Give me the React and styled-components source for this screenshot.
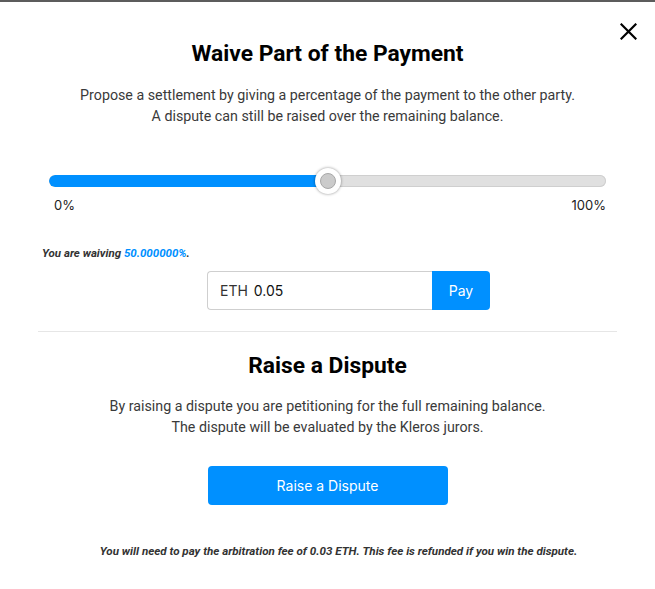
import React from "react";
import styled, { createGlobalStyle } from "styled-components";

const Global = createGlobalStyle`
  html, body { margin: 0; padding: 0; background: #fff; }
  body { font-family: Roboto, "Noto Sans", sans-serif; }
  * { box-sizing: border-box; }
`;

const BLUE = "#0090ff";

const Modal = styled.div`
  position: relative;
  width: 655px;
  height: 589px;
  border-top: 2px solid #5c5c5c;
  padding: 39px 38px 0;
  display: flex;
  flex-direction: column;
  align-items: center;
  background: #fff;
`;

const Close = styled.button`
  position: absolute;
  top: 18px;
  right: 16px;
  width: 22px;
  height: 22px;
  padding: 0;
  border: none;
  background: none;
  display: flex;
  align-items: center;
  justify-content: center;
  cursor: pointer;
`;

const Title = styled.h2`
  margin: ${(p) => p.$mt || 0}px 0 0;
  font-family: Roboto, sans-serif;
  font-weight: 700;
  font-size: 22.8px;
  line-height: 26px;
  color: #000;
  text-align: center;
`;

const Para = styled.p`
  margin: ${(p) => p.$mt}px 0 0;
  font-family: Roboto, sans-serif;
  font-size: 14.25px;
  line-height: 21px;
  color: #3a3a3a;
  text-align: center;
`;

const SliderBlock = styled.div`
  align-self: stretch;
  margin: 42px 11px 0;
  display: flex;
  flex-direction: column;
`;

const Track = styled.div`
  position: relative;
  height: 24px;
  display: flex;
  align-items: center;
`;

const Rail = styled.div`
  width: 100%;
  height: 12px;
  border-radius: 6px;
  background: #e0e0e0;
  box-shadow: inset 0 0 0 1px #cfcfcf;
  overflow: hidden;
  display: flex;
`;

const Fill = styled.div`
  height: 100%;
  background: ${BLUE};
  border-radius: 6px 0 0 6px;
`;

const Thumb = styled.div`
  position: absolute;
  top: -1px;
  width: 26px;
  height: 26px;
  margin-left: -13px;
  border-radius: 50%;
  background: #fff;
  box-shadow: 0 0 3px rgba(0, 0, 0, 0.45);
  display: flex;
  align-items: center;
  justify-content: center;

  &::after {
    content: "";
    width: 14px;
    height: 14px;
    border-radius: 50%;
    background: #cbcbcb;
    border: 1px solid #a8a8a8;
  }
`;

const Labels = styled.div`
  margin-top: 4px;
  display: flex;
  justify-content: space-between;
  padding: 0 0 0 5px;
  font-family: Inter, "Liberation Sans", sans-serif;
  font-size: 13px;
  line-height: 16px;
  color: #222;
`;

const Waiving = styled.div`
  align-self: flex-start;
  margin: 33px 0 0 4px;
  font-family: Roboto, sans-serif;
  font-style: italic;
  font-weight: 700;
  font-size: 11.5px;
  line-height: 14px;
  color: #333;

  span { color: ${BLUE}; }
`;

const InputGroup = styled.div`
  align-self: flex-start;
  margin: 11px 0 0 169px;
  display: flex;
  height: 39px;
`;

const Input = styled.div`
  width: 225px;
  border: 1px solid #cfcfcf;
  border-right: none;
  border-radius: 4px 0 0 4px;
  display: flex;
  align-items: center;
  gap: 6px;
  padding-left: 12px;
  font-family: Inter, "Liberation Sans", sans-serif;
  font-size: 14px;
  color: #111;
`;

const Unit = styled.span`
  color: #333;
`;

const Button = styled.button`
  border: none;
  background: ${BLUE};
  color: #fff;
  font-family: Inter, "Liberation Sans", sans-serif;
  font-size: ${(p) => p.$size || 14}px;
  border-radius: ${(p) => (p.$joined ? "0 4px 4px 0" : "4px")};
  width: ${(p) => p.$w}px;
  height: 39px;
  margin-top: ${(p) => p.$mt || 0}px;
  padding: 0;
  cursor: pointer;
`;

const Divider = styled.hr`
  align-self: stretch;
  margin: 21px 0 0;
  border: none;
  border-top: 1px solid #e6e6e6;
  height: 0;
`;

const Note = styled.p`
  margin: 39px 0 0;
  padding-left: 22px;
  font-family: Roboto, sans-serif;
  font-style: italic;
  font-weight: 700;
  font-size: 11.6px;
  line-height: 14px;
  color: #333;
  text-align: center;
  white-space: nowrap;
`;

export default function App() {
  const pct = 50;
  return (
    <>
      <Global />
      <Modal>
        <Close aria-label="Close">
          <svg width="17" height="17" viewBox="0 0 17 17">
            <path d="M1.5 1.5 L15.5 15.5 M15.5 1.5 L1.5 15.5" stroke="#000" strokeWidth="2.2" strokeLinecap="square" />
          </svg>
        </Close>

        <Title>Waive Part of the Payment</Title>
        <Para $mt={18}>
          Propose a settlement by giving a percentage of the payment to the other party.
          <br />
          A dispute can still be raised over the remaining balance.
        </Para>

        <SliderBlock>
          <Track>
            <Rail>
              <Fill style={{ width: `${pct}%` }} />
            </Rail>
            <Thumb style={{ left: `${pct}%` }} />
          </Track>
          <Labels>
            <span>0%</span>
            <span>100%</span>
          </Labels>
        </SliderBlock>

        <Waiving>
          You are waiving <span>50.000000%</span>.
        </Waiving>

        <InputGroup>
          <Input>
            <Unit>ETH</Unit>
            <span>0.05</span>
          </Input>
          <Button $joined $w={58}>Pay</Button>
        </InputGroup>

        <Divider />

        <Title $mt={21}>Raise a Dispute</Title>
        <Para $mt={17}>
          By raising a dispute you are petitioning for the full remaining balance.
          <br />
          The dispute will be evaluated by the Kleros jurors.
        </Para>

        <Button $w={240} $mt={28} $size={14}>Raise a Dispute</Button>

        <Note>
          You will need to pay the arbitration fee of 0.03 ETH. This fee is refunded if you win the dispute.
        </Note>
      </Modal>
    </>
  );
}
